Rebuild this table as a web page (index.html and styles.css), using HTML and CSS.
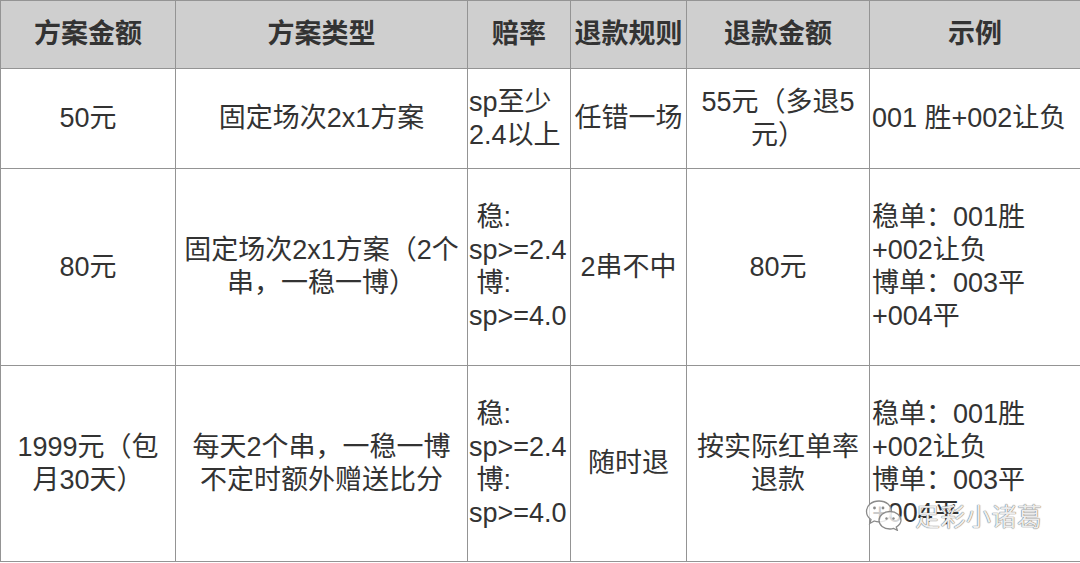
FILE: index.html
```html
<!DOCTYPE html>
<html lang="zh">
<head>
<meta charset="utf-8">
<link rel="stylesheet" href="styles.css">
</head>
<body>
<div class="page">
<table class="plans">
  <colgroup>
    <col class="c1"><col class="c2"><col class="c3"><col class="c4"><col class="c5"><col class="c6">
  </colgroup>
  <thead>
    <tr class="head">
      <th>方案金额</th><th>方案类型</th><th>赔率</th><th>退款规则</th><th>退款金额</th><th>示例</th>
    </tr>
  </thead>
  <tbody>
    <tr class="r1">
      <td>50元</td>
      <td>固定场次2x1方案</td>
      <td class="odds">sp至少<br>2.4以上</td>
      <td>任错一场</td>
      <td>55元（多退5<br>元）</td>
      <td class="ex">001 胜+002让负</td>
    </tr>
    <tr class="r2">
      <td>80元</td>
      <td>固定场次2x1方案（2个<br>串，一稳一博）</td>
      <td class="odds">&nbsp;稳:<br>sp&gt;=2.4<br>&nbsp;博:<br>sp&gt;=4.0</td>
      <td>2串不中</td>
      <td>80元</td>
      <td class="ex">稳单：001胜<br>+002让负<br>博单：003平<br>+004平</td>
    </tr>
    <tr class="r3">
      <td>1999元（包<br>月30天）</td>
      <td>每天2个串，一稳一博<br>不定时额外赠送比分</td>
      <td class="odds">&nbsp;稳:<br>sp&gt;=2.4<br>&nbsp;博:<br>sp&gt;=4.0</td>
      <td>随时退</td>
      <td>按实际红单率<br>退款</td>
      <td class="ex">稳单：001胜<br>+002让负<br>博单：003平<br>+004平</td>
    </tr>
  </tbody>
</table>
<div class="watermark">
  <svg class="wm-icon" width="38" height="32" viewBox="0 0 38 32">
    <path d="M14 2 C6.5 2 1.5 6.8 1.5 12.5 C1.5 15.8 3.2 18.6 6 20.5 L4.8 24.5 L9.3 22 C10.8 22.5 12.4 22.8 14 22.8 C21.5 22.8 26.5 18 26.5 12.4 C26.5 6.8 21.5 2 14 2 Z" fill="rgba(255,255,255,0.75)" stroke="#8a8a8a" stroke-width="1.3"/>
    <path d="M25 12.5 C18.5 12.5 14 16.6 14 21.3 C14 26 18.5 30 25 30 C26.3 30 27.5 29.8 28.6 29.4 L32.3 31.3 L31.3 28 C34 26.4 36 24 36 21.3 C36 16.6 31.5 12.5 25 12.5 Z" fill="rgba(255,255,255,0.8)" stroke="#8a8a8a" stroke-width="1.3"/>
    <circle cx="9.5" cy="9" r="1.4" fill="#8a8a8a"/>
    <circle cx="18" cy="9" r="1.4" fill="#8a8a8a"/>
    <circle cx="21.5" cy="19.5" r="1.2" fill="#8a8a8a"/>
    <circle cx="28.5" cy="19.5" r="1.2" fill="#8a8a8a"/>
  </svg>
  <span class="wm-text">足彩小诸葛</span>
</div>
</div>
</body>
</html>
```

FILE: styles.css
```css
html, body {
  margin: 0;
  padding: 0;
  background: #ffffff;
}

.page {
  position: relative;
  width: 1080px;
  height: 563px;
  overflow: hidden;
}

.plans {
  border-collapse: collapse;
  table-layout: fixed;
  width: 1080px;
  font-family: "Liberation Sans", "Noto Sans CJK SC", sans-serif;
  font-size: 27px;
  line-height: 33px;
  color: #333333;
}

.c1 { width: 175px; }
.c2 { width: 292px; }
.c3 { width: 103px; }
.c4 { width: 116px; }
.c5 { width: 183px; }
.c6 { width: 211px; }

.plans th,
.plans td {
  border: 1px solid #949494;
  padding: 0 2px;
  text-align: center;
  vertical-align: middle;
  white-space: nowrap;
  overflow: hidden;
}

.head th {
  height: 67px;
  background: #cfcfcf;
  font-weight: bold;
  color: #333333;
}

.r1 td { height: 99px; }
.r2 td { height: 196px; }
.r3 td { height: 195px; }

.plans td.odds {
  text-align: left;
  padding-left: 1px;
  padding-right: 0;
}

.plans td.ex {
  text-align: left;
  padding-left: 2px;
}

.watermark {
  position: absolute;
  left: 865px;
  top: 499px;
  display: flex;
  align-items: center;
  gap: 12px;
}

.wm-text {
  font-family: "Noto Sans CJK SC", sans-serif;
  font-size: 25px;
  line-height: 30px;
  color: rgba(255, 255, 255, 0.9);
  text-shadow: 0 0 1px #6a6a6a, 0 0 1px #6a6a6a;
  letter-spacing: 0.5px;
}
```
